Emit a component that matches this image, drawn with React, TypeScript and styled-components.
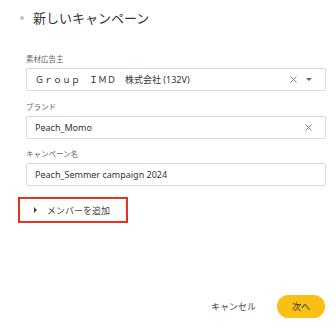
import React from "react";
import styled, { createGlobalStyle } from "styled-components";

const Global = createGlobalStyle`
  html, body { margin: 0; padding: 0; background: #fff; }
  body { font-family: "Noto Sans", "Noto Sans CJK JP", sans-serif; color: #333; }
`;

const Page = styled.div`
  width: 336px;
  height: 328px;
  display: flex;
  flex-direction: column;
  box-sizing: border-box;
  padding: 9px 10px 10px 26px;
`;

const Header = styled.div`
  display: flex;
  align-items: center;
  gap: 9px;
  margin-left: -6px;
  height: 18px;
`;

const Dot = styled.span`
  width: 4px;
  height: 4px;
  border-radius: 50%;
  background: #c4c4c4;
`;

const Title = styled.h1`
  margin: 0;
  font-size: 13px;
  font-weight: 400;
  color: #333;
  line-height: 18px;
`;

const Field = styled.div<{ $top: number }>`
  display: flex;
  flex-direction: column;
  margin-top: ${(p) => p.$top}px;
`;

const Label = styled.label`
  font-size: 7.5px;
  color: #666;
  line-height: 10px;
  margin-bottom: 4px;
`;

const Box = styled.div`
  height: 23px;
  box-sizing: border-box;
  border: 1px solid #d9d9d9;
  border-radius: 2px;
  display: flex;
  align-items: center;
  padding: 0 13px 0 8px;
  font-size: 9px;
  color: #333;
`;

const Value = styled.span`
  flex: 1;
  white-space: nowrap;
`;

const Icons = styled.div`
  display: flex;
  align-items: center;
  gap: 9px;
`;

const AddMember = styled.button`
  align-self: flex-start;
  margin-top: 11px;
  margin-left: -8px;
  width: 110px;
  height: 26px;
  box-sizing: border-box;
  border: 2px solid #e8321e;
  background: #fff;
  display: flex;
  align-items: center;
  gap: 10px;
  padding: 0 0 0 14px;
  font-family: inherit;
  font-size: 9px;
  color: #444;
  cursor: pointer;
`;

const Caret = styled.span`
  width: 0;
  height: 0;
  border-top: 3px solid transparent;
  border-bottom: 3px solid transparent;
  border-left: 3.5px solid #444;
`;

const Footer = styled.div`
  margin-top: auto;
  display: flex;
  justify-content: flex-end;
  align-items: center;
  gap: 21px;
  padding-right: 1px;
`;

const Cancel = styled.button`
  border: none;
  background: none;
  font-family: inherit;
  font-size: 9px;
  color: #444;
  padding: 0;
`;

const Next = styled.button`
  width: 48px;
  height: 23px;
  border: none;
  border-radius: 12px;
  background: #f9bf12;
  font-family: inherit;
  font-size: 9px;
  color: #333;
  padding: 0;
`;

const ClearIcon = () => (
  <svg width="7" height="7" viewBox="0 0 7 7">
    <path d="M0.5 0.5L6.5 6.5M6.5 0.5L0.5 6.5" stroke="#777" strokeWidth="0.9" />
  </svg>
);

const DownIcon = () => (
  <svg width="6" height="3" viewBox="0 0 6 3">
    <path d="M0 0H6L3 3Z" fill="#666" />
  </svg>
);

export default function App() {
  return (
    <>
      <Global />
      <Page>
        <Header>
          <Dot />
          <Title>新しいキャンペーン</Title>
        </Header>
        <Field $top={27}>
          <Label>素材広告主</Label>
          <Box>
            <Value>Ｇｒｏｕｐ　ＩＭＤ　株式会社 (132V)</Value>
            <Icons>
              <ClearIcon />
              <DownIcon />
            </Icons>
          </Box>
        </Field>
        <Field $top={11}>
          <Label>ブランド</Label>
          <Box>
            <Value>Peach_Momo</Value>
            <Icons>
              <ClearIcon />
            </Icons>
          </Box>
        </Field>
        <Field $top={10}>
          <Label>キャンペーン名</Label>
          <Box>
            <Value>Peach_Semmer campaign 2024</Value>
          </Box>
        </Field>
        <AddMember>
          <Caret />
          メンバーを追加
        </AddMember>
        <Footer>
          <Cancel>キャンセル</Cancel>
          <Next>次へ</Next>
        </Footer>
      </Page>
    </>
  );
}
